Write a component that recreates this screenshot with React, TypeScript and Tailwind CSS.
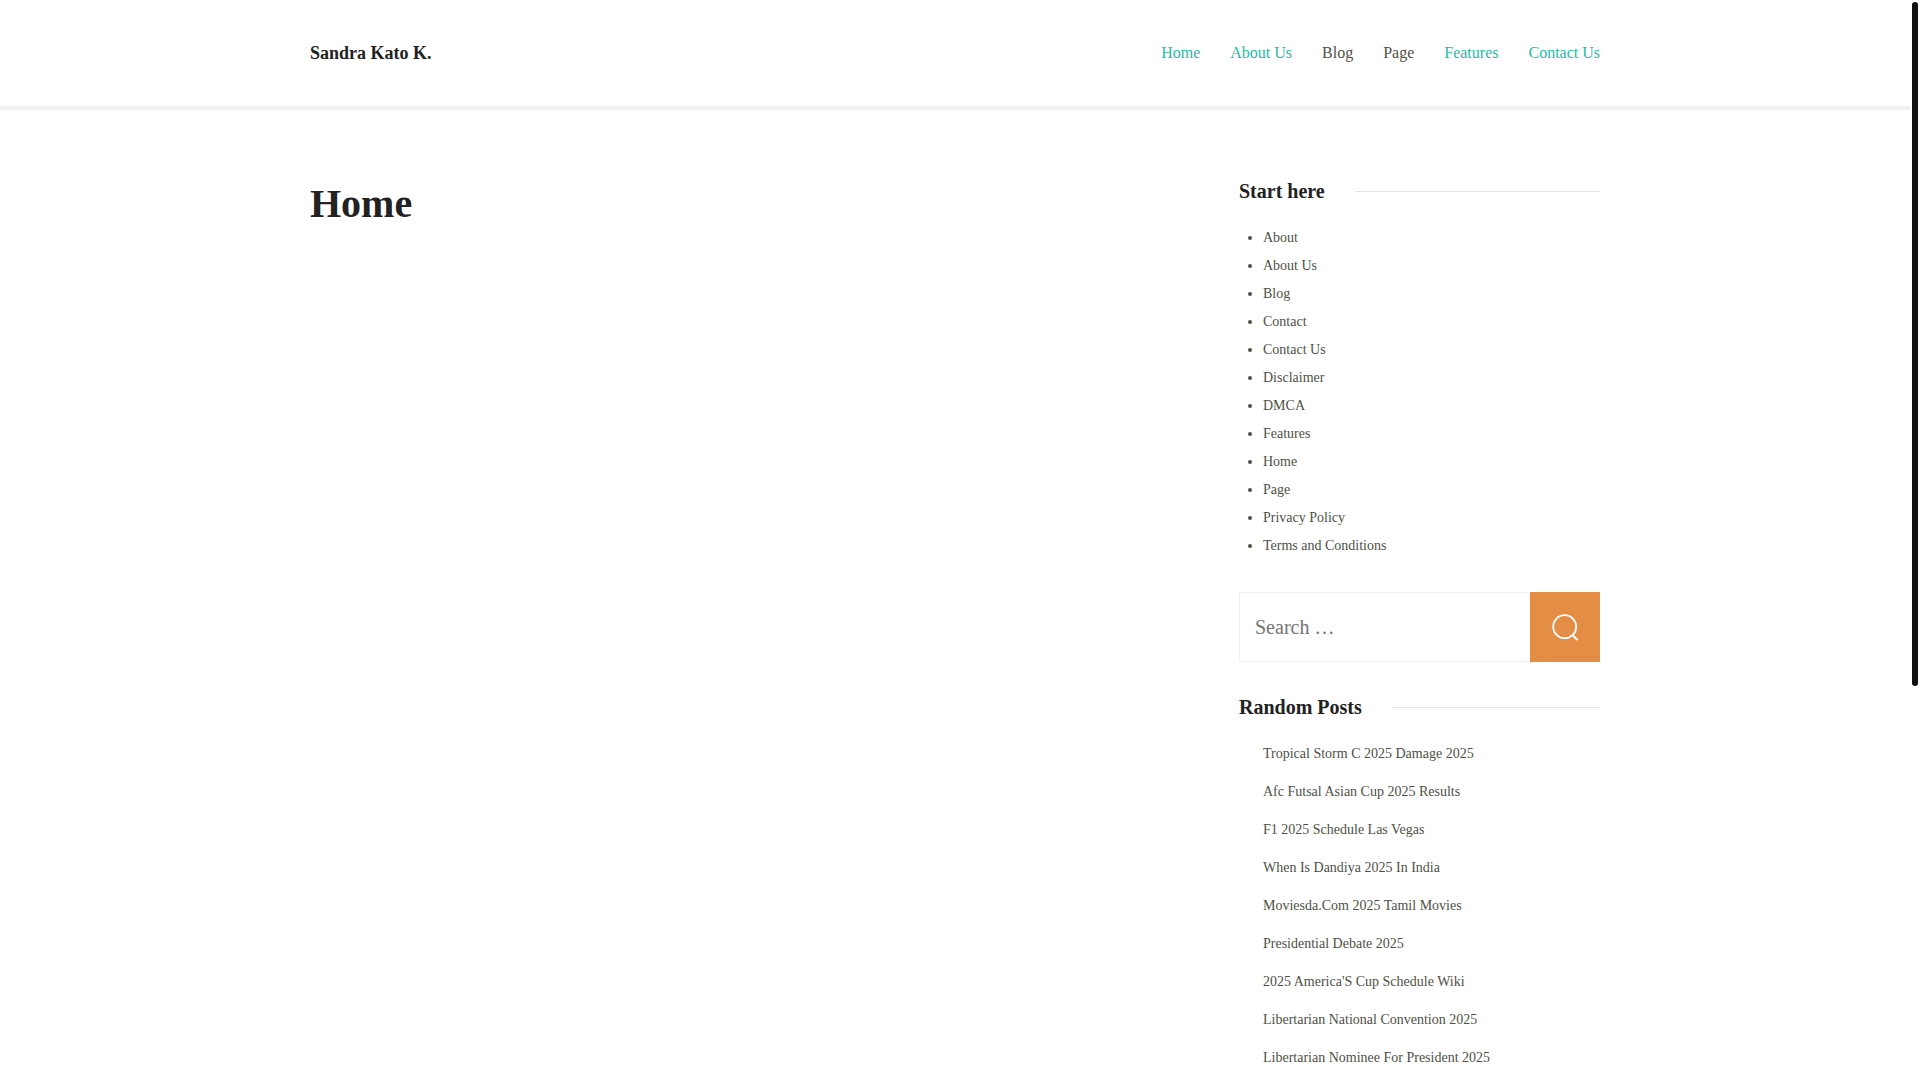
import { useState } from 'react';

const navLinks = [
    { path: '#home', label: 'Home', active: true },
    { path: '#about-us', label: 'About Us', active: true },
    { path: '#blog', label: 'Blog', active: false },
    { path: '#page', label: 'Page', active: false },
    { path: '#features', label: 'Features', active: true },
    { path: '#contact-us', label: 'Contact Us', active: true }
];

const pages = [
    'About',
    'About Us',
    'Blog',
    'Contact',
    'Contact Us',
    'Disclaimer',
    'DMCA',
    'Features',
    'Home',
    'Page',
    'Privacy Policy',
    'Terms and Conditions'
];

const randomPosts = [
    'Tropical Storm C 2025 Damage 2025',
    'Afc Futsal Asian Cup 2025 Results',
    'F1 2025 Schedule Las Vegas',
    'When Is Dandiya 2025 In India',
    'Moviesda.Com 2025 Tamil Movies',
    'Presidential Debate 2025',
    "2025 America'S Cup Schedule Wiki",
    'Libertarian National Convention 2025',
    'Libertarian Nominee For President 2025'
];

const Header = () => (
    <header className="border-b-4 border-[#f1f1ef]">
        <div className="max-w-[1290px] mx-auto h-[106px] flex items-center justify-between">
            <a href="#home" className="text-lg font-bold text-[#222222]">
                Sandra Kato K.
            </a>
            <nav aria-label="Main">
                <ul className="flex items-center gap-[30px] text-base">
                    {navLinks.map((link) => (
                        <li key={link.path}>
                            <a
                                href={link.path}
                                className={link.active ? 'text-[#2bb9a5]' : 'text-[#4f5045] hover:text-[#2bb9a5]'}
                            >
                                {link.label}
                            </a>
                        </li>
                    ))}
                </ul>
            </nav>
        </div>
    </header>
);

const WidgetTitle = ({ children }: { children: string }) => (
    <div className="flex items-center gap-[30px] mb-[17px]">
        <h2 className="text-xl leading-8 font-bold text-[#222222]">{children}</h2>
        <span className="flex-1 h-px bg-[#e6e6e6]" />
    </div>
);

const SearchForm = () => {
    const [query, setQuery] = useState('');

    return (
        <form role="search" className="flex h-[70px]" onSubmit={(e) => e.preventDefault()}>
            <input
                type="search"
                aria-label="Search"
                placeholder="Search …"
                value={query}
                onChange={(e) => setQuery(e.target.value)}
                className="flex-1 min-w-0 px-[15px] text-xl border border-r-0 border-[#f1f1ef] placeholder:text-[#757575] outline-none"
            />
            <button
                type="submit"
                aria-label="Search"
                className="w-[70px] flex items-center justify-center bg-[#e38d45] text-white"
            >
                <svg width="28" height="28" viewBox="0 0 28 28" fill="none" stroke="currentColor" strokeWidth="1.8">
                    <circle cx="13.7" cy="13.7" r="11.5" />
                    <path d="M21.4 21.9 L26.5 27" strokeWidth="2" />
                </svg>
            </button>
        </form>
    );
};

const Sidebar = () => (
    <aside className="w-[361px] shrink-0 text-sm leading-7 text-[#4f5045]">
        <WidgetTitle>Start here</WidgetTitle>
        <ul className="list-disc pl-6 mb-8">
            {pages.map((page) => (
                <li key={page}>
                    <a href="#page" className="hover:text-[#2bb9a5]">{page}</a>
                </li>
            ))}
        </ul>

        <SearchForm />

        <div className="mt-[29px]">
            <WidgetTitle>Random Posts</WidgetTitle>
            <ul className="pl-6 flex flex-col gap-2.5">
                {randomPosts.map((post) => (
                    <li key={post}>
                        <a href="#post" className="hover:text-[#2bb9a5]">{post}</a>
                    </li>
                ))}
            </ul>
        </div>
    </aside>
);

const App = () => (
    <div className="min-h-screen bg-white pr-2.5 font-['Liberation_Serif',serif]">
        <Header />
        <div className="max-w-[1290px] mx-auto pt-[65px] flex justify-between">
            <main>
                <h1 className="pt-[5px] text-[40px] leading-[48px] font-bold text-[#222222]">Home</h1>
            </main>
            <Sidebar />
        </div>

        {/* Scroll indicator */}
        <div aria-hidden="true" className="fixed top-0.5 right-0.5 w-1.5 h-[684px] rounded-full bg-[#111111]" />
    </div>
);

export default App;
